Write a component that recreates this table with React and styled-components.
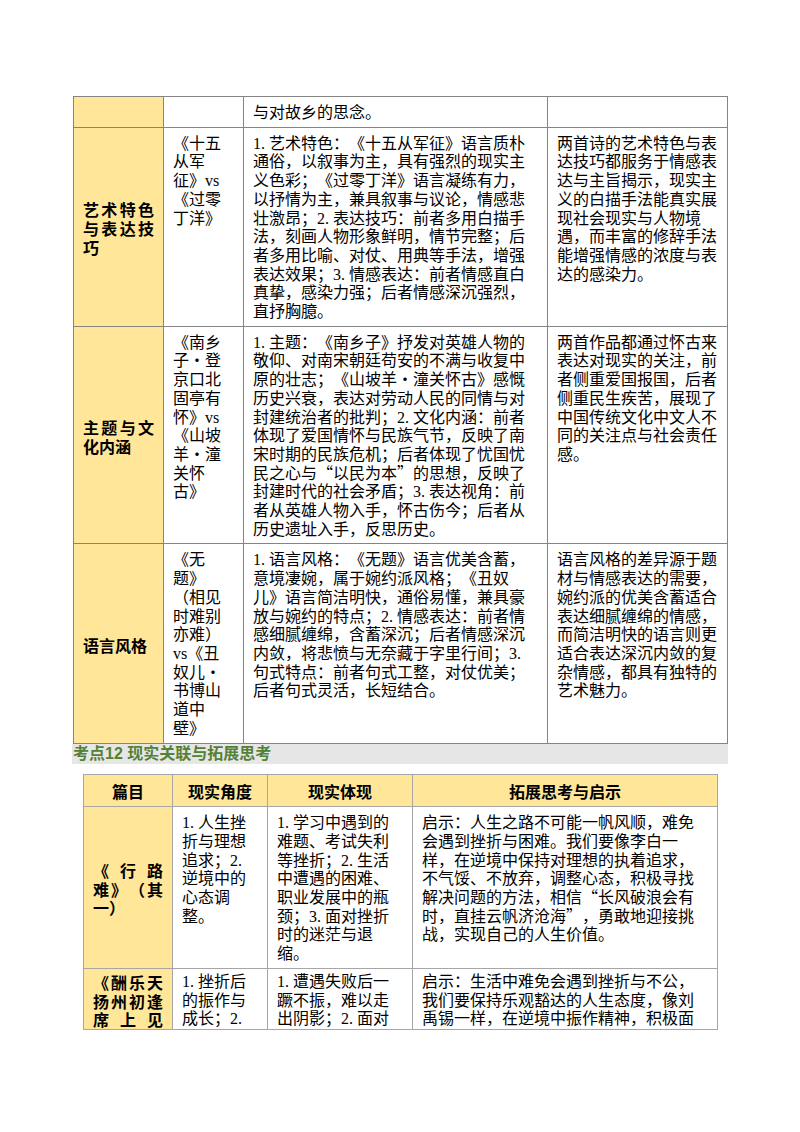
import React from 'react';
import styled, { createGlobalStyle } from 'styled-components';

const GlobalStyle = createGlobalStyle`
  html, body { margin: 0; padding: 0; background: #ffffff; }
  body {
    font-family: "Liberation Serif", "Noto Sans CJK SC", serif;
    color: #000000;
    text-spacing-trim: space-all;
    text-autospace: no-autospace;
  }
`;

const Page = styled.div`
  width: 800px;
  min-height: 1132px;
  box-sizing: border-box;
  padding: 96px 0 0 72px;
`;

const Column = styled.div`
  width: 656px;
  display: flex;
  flex-direction: column;
`;

const Table = styled.div`
  --line: ${p => p.$line};
  display: grid;
  grid-template-columns: ${p => p.$cols};
  border-top: 1px solid var(--line);
  border-left: 1px solid var(--line);
  margin-left: ${p => p.$indent}px;
  align-self: flex-start;
`;

const Cell = styled.div`
  box-sizing: border-box;
  min-width: 0;
  border-right: 1px solid var(--line);
  border-bottom: 1px solid var(--line);
  padding: ${p => (p.$cut ? '4px 9px 0' : '7px 9px 4px')};
  font-size: 16px;
  line-height: 18.7px;
  text-spacing-trim: space-all;
  background: ${p => (p.$fill ? '#ffe699' : '#ffffff')};
`;

const Label = styled(Cell)`
  display: flex;
  flex-direction: column;
  justify-content: ${p => (p.$cut ? 'flex-start' : 'center')};
  font-family: "Noto Sans CJK SC", sans-serif;
  font-weight: 700;
  text-align: justify;
  text-align-last: ${p => (p.$cut ? 'justify' : 'auto')};
`;

const HeadCell = styled(Cell)`
  font-family: "Noto Sans CJK SC", sans-serif;
  font-weight: 700;
  text-align: center;
  padding: 7px 9px 6px;
`;

const Q = styled.span`
  font-family: "Noto Sans CJK SC", sans-serif;
  font-feature-settings: "fwid" 1;
  line-height: 0;
`;

const Band = styled.div`
  height: 20px;
  background: #e7e6e6;
  color: #538135;
  font-family: "Liberation Sans", "Noto Sans CJK SC", sans-serif;
  font-weight: 700;
  font-size: 16px;
  line-height: 20px;
  padding-left: 1px;
  margin-bottom: 10px;
  white-space: nowrap;
`;

const withQuotes = text =>
  text.split(/([“”])/).map((part, i) =>
    part === '“' || part === '”' ? <Q key={i}>{part}</Q> : <React.Fragment key={i}>{part}</React.Fragment>
  );

const table1 = [
  { label: '', work: '', detail: '与对故乡的思念。', note: '' },
  {
    label: '艺术特色与表达技巧',
    work: '《十五从军征》vs《过零丁洋》',
    detail:
      '1. 艺术特色：《十五从军征》语言质朴通俗，以叙事为主，具有强烈的现实主义色彩；《过零丁洋》语言凝练有力，以抒情为主，兼具叙事与议论，情感悲壮激昂；2. 表达技巧：前者多用白描手法，刻画人物形象鲜明，情节完整；后者多用比喻、对仗、用典等手法，增强表达效果；3. 情感表达：前者情感直白真挚，感染力强；后者情感深沉强烈，直抒胸臆。',
    note:
      '两首诗的艺术特色与表达技巧都服务于情感表达与主旨揭示，现实主义的白描手法能真实展现社会现实与人物境遇，而丰富的修辞手法能增强情感的浓度与表达的感染力。',
  },
  {
    label: '主题与文化内涵',
    work: '《南乡子・登京口北固亭有怀》vs《山坡羊・潼关怀古》',
    detail:
      '1. 主题：《南乡子》抒发对英雄人物的敬仰、对南宋朝廷苟安的不满与收复中原的壮志；《山坡羊・潼关怀古》感慨历史兴衰，表达对劳动人民的同情与对封建统治者的批判；2. 文化内涵：前者体现了爱国情怀与民族气节，反映了南宋时期的民族危机；后者体现了忧国忧民之心与“以民为本”的思想，反映了封建时代的社会矛盾；3. 表达视角：前者从英雄人物入手，怀古伤今；后者从历史遗址入手，反思历史。',
    note:
      '两首作品都通过怀古来表达对现实的关注，前者侧重爱国报国，后者侧重民生疾苦，展现了中国传统文化中文人不同的关注点与社会责任感。',
  },
  {
    label: '语言风格',
    work: '《无题》（相见时难别亦难）vs《丑奴儿・书博山道中壁》',
    detail:
      '1. 语言风格：《无题》语言优美含蓄，意境凄婉，属于婉约派风格；《丑奴儿》语言简洁明快，通俗易懂，兼具豪放与婉约的特点；2. 情感表达：前者情感细腻缠绵，含蓄深沉；后者情感深沉内敛，将悲愤与无奈藏于字里行间；3. 句式特点：前者句式工整，对仗优美；后者句式灵活，长短结合。',
    note:
      '语言风格的差异源于题材与情感表达的需要，婉约派的优美含蓄适合表达细腻缠绵的情感，而简洁明快的语言则更适合表达深沉内敛的复杂情感，都具有独特的艺术魅力。',
  },
];

const table2Head = ['篇目', '现实角度', '现实体现', '拓展思考与启示'];

const table2 = [
  {
    label: '《行路难》（其一）',
    angle: '1. 人生挫折与理想追求；2. 逆境中的心态调整。',
    reality: '1. 学习中遇到的难题、考试失利等挫折；2. 生活中遭遇的困难、职业发展中的瓶颈；3. 面对挫折时的迷茫与退缩。',
    insight:
      '启示：人生之路不可能一帆风顺，难免会遇到挫折与困难。我们要像李白一样，在逆境中保持对理想的执着追求，不气馁、不放弃，调整心态，积极寻找解决问题的方法，相信“长风破浪会有时，直挂云帆济沧海”，勇敢地迎接挑战，实现自己的人生价值。',
  },
  {
    label: '《酬乐天扬州初逢席上见',
    angle: '1. 挫折后的振作与成长；2.',
    reality: '1. 遭遇失败后一蹶不振，难以走出阴影；2. 面对',
    insight: '启示：生活中难免会遇到挫折与不公，我们要保持乐观豁达的人生态度，像刘禹锡一样，在逆境中振作精神，积极面',
    cut: true,
  },
];

export default function App() {
  return (
    <>
      <GlobalStyle />
      <Page lang="zh-CN">
        <Column>
          <Table $cols="90px 80px 304px 180px" $line="#858585" $indent={1}>
            {table1.map((row, i) => (
              <React.Fragment key={i}>
                <Label $fill>{row.label}</Label>
                <Cell>{row.work}</Cell>
                <Cell>{withQuotes(row.detail)}</Cell>
                <Cell>{row.note}</Cell>
              </React.Fragment>
            ))}
          </Table>
          <Band>考点12 现实关联与拓展思考</Band>
          <Table $cols="89px 95px 145px 305px" $line="#a6a6a6" $indent={11}>
            {table2Head.map(h => (
              <HeadCell key={h} $fill>
                {h}
              </HeadCell>
            ))}
            {table2.map((row, i) => (
              <React.Fragment key={i}>
                <Label $fill $cut={row.cut}>
                  {row.label}
                </Label>
                <Cell $cut={row.cut}>{row.angle}</Cell>
                <Cell $cut={row.cut}>{row.reality}</Cell>
                <Cell $cut={row.cut}>{withQuotes(row.insight)}</Cell>
              </React.Fragment>
            ))}
          </Table>
        </Column>
      </Page>
    </>
  );
}
